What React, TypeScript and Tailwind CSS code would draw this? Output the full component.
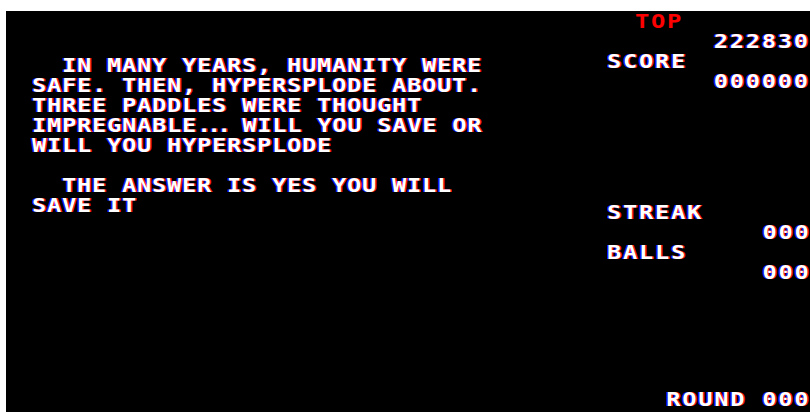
const glow = "[text-shadow:1px_0_#ff1a1a,-1px_0_#1a1aff]";

const Row = ({
  children,
  right,
  className = "",
}: {
  children: React.ReactNode;
  right?: boolean;
  className?: string;
}) => (
  <div
    className={`h-[20px] leading-[20px] whitespace-pre ${right ? "text-right" : ""} ${className}`}
  >
    <span className={`inline-block scale-x-125 ${right ? "origin-right" : "origin-left"}`}>
      {children}
    </span>
  </div>
);

const Dots = () => <span className="tracking-[-3.4px]">...</span>;

export default function App() {
  return (
    <div className="w-[810px] h-[412px] bg-white pl-[6px] pt-[11px] overflow-hidden">
      <div className="flex h-full bg-black text-white font-bold font-['DejaVu_Sans_Mono',monospace] text-[19px]">
        <div className={`w-[601px] pl-[26px] pt-[44px] tracking-[0.56px] ${glow}`}>
          <Row>{"  IN MANY YEARS, HUMANITY WERE"}</Row>
          <Row>SAFE. THEN, HYPERSPLODE ABOUT.</Row>
          <Row>THREE PADDLES WERE THOUGHT</Row>
          <Row>
            IMPREGNABLE<Dots />
            {" WILL YOU SAVE OR"}
          </Row>
          <Row>WILL YOU HYPERSPLODE</Row>
          <Row>{""}</Row>
          <Row>{"  THE ANSWER IS YES YOU WILL"}</Row>
          <Row>SAVE IT</Row>
        </div>
        <div className={`flex-1 flex flex-col tracking-[1.36px] ${glow}`}>
          <Row className="pl-[28px] text-[#ff0000] [text-shadow:none]">TOP</Row>
          <Row right>222830</Row>
          <Row>SCORE</Row>
          <Row right>000000</Row>
          <Row className="mt-[111px]">STREAK</Row>
          <Row right>000</Row>
          <Row>BALLS</Row>
          <Row right>000</Row>
          <Row right className="mt-auto mb-[3px]">
            ROUND 000
          </Row>
        </div>
      </div>
    </div>
  );
}
